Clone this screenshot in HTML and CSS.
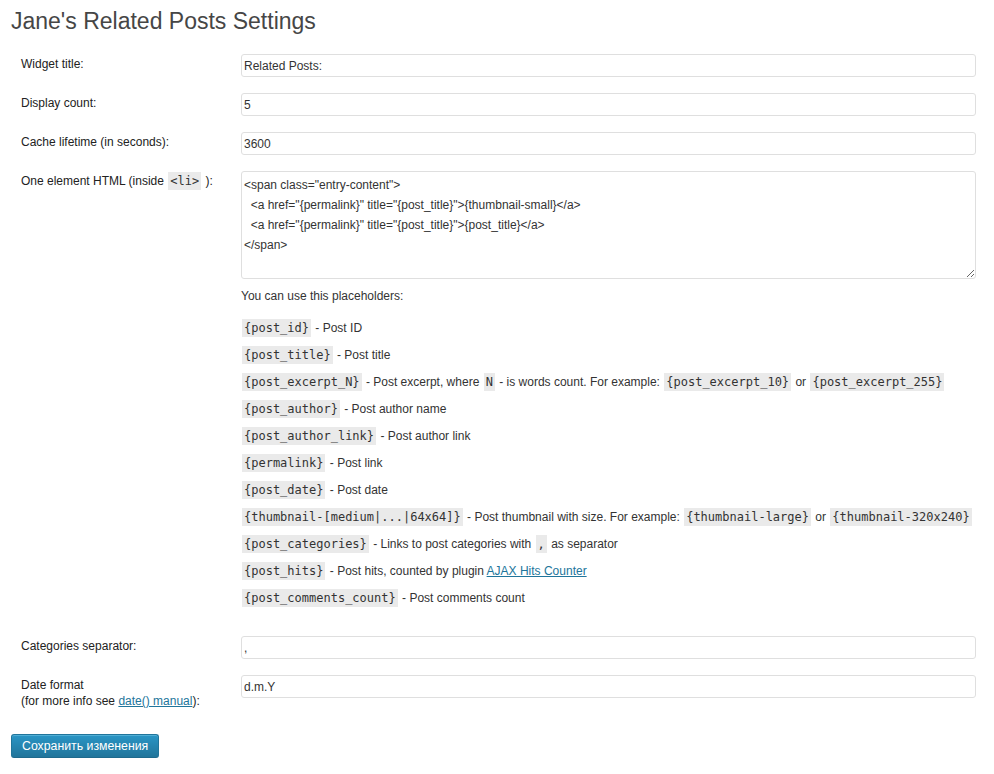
FILE: index.html
```html
<!DOCTYPE html>
<html>
<head>
<meta charset="utf-8">
<link rel="stylesheet" href="styles.css">
</head>
<body>
<div class="wrap">
  <h2 class="page-title">Jane's Related Posts Settings</h2>
  <form class="form">
    <div class="form-table">
      <div class="row">
        <div class="label">Widget title:</div>
        <div class="field"><input class="text-input" type="text" value="Related Posts:"></div>
      </div>
      <div class="row">
        <div class="label">Display count:</div>
        <div class="field"><input class="text-input" type="text" value="5"></div>
      </div>
      <div class="row">
        <div class="label">Cache lifetime (in seconds):</div>
        <div class="field"><input class="text-input" type="text" value="3600"></div>
      </div>
      <div class="row">
        <div class="label">One element HTML (inside <code>&lt;li&gt;</code> ):</div>
        <div class="field">
          <textarea class="html-area">&lt;span class="entry-content"&gt;
  &lt;a href="{permalink}" title="{post_title}"&gt;{thumbnail-small}&lt;/a&gt;
  &lt;a href="{permalink}" title="{post_title}"&gt;{post_title}&lt;/a&gt;
&lt;/span&gt;</textarea>
          <p class="hint">You can use this placeholders:</p>
          <div class="placeholders">
            <p><code>{post_id}</code> - Post ID</p>
            <p><code>{post_title}</code> - Post title</p>
            <p><code>{post_excerpt_N}</code> - Post excerpt, where <code>N</code> - is words count. For example: <code>{post_excerpt_10}</code> or <code>{post_excerpt_255}</code></p>
            <p><code>{post_author}</code> - Post author name</p>
            <p><code>{post_author_link}</code> - Post author link</p>
            <p><code>{permalink}</code> - Post link</p>
            <p><code>{post_date}</code> - Post date</p>
            <p><code>{thumbnail-[medium|...|64x64]}</code> - Post thumbnail with size. For example: <code>{thumbnail-large}</code> or <code>{thumbnail-320x240}</code></p>
            <p><code>{post_categories}</code> - Links to post categories with <code>,</code> as separator</p>
            <p><code>{post_hits}</code> - Post hits, counted by plugin <a href="#">AJAX Hits Counter</a></p>
            <p><code>{post_comments_count}</code> - Post comments count</p>
          </div>
        </div>
      </div>
      <div class="row">
        <div class="label">Categories separator:</div>
        <div class="field"><input class="text-input" type="text" value=","></div>
      </div>
      <div class="row">
        <div class="label">Date format<br>(for more info see <a href="#">date() manual</a>):</div>
        <div class="field"><input class="text-input" type="text" value="d.m.Y"></div>
      </div>
    </div>
    <p class="submit"><button type="button" class="button-primary">Сохранить изменения</button></p>
  </form>
</div>
</body>
</html>
```
FILE: styles.css
```css
html, body {
  margin: 0;
  padding: 0;
  background: #fff;
}
body {
  font-family: "Liberation Sans", Arial, sans-serif;
  font-size: 12px;
  line-height: 16px;
  color: #333;
}
.wrap {
  padding: 0 18px 0 11px;
}
.page-title {
  margin: 0;
  padding: 7px 0 4px;
  font-size: 23px;
  line-height: 29px;
  font-weight: normal;
  color: #464646;
}
.form-table {
  margin-top: 6px;
  display: grid;
  grid-template-columns: 230px 1fr;
}
.row {
  display: contents;
}
.label {
  padding: 10px 10px 10px 10px;
  color: #222;
}
.field {
  padding: 8px 0;
}
.text-input {
  display: block;
  box-sizing: border-box;
  width: 100%;
  height: 23px;
  margin: 0;
  padding: 2px 2px;
  border: 1px solid #dfdfdf;
  border-radius: 3px;
  background: #fff;
  font-family: "Liberation Sans", Arial, sans-serif;
  font-size: 12px;
  color: #333;
  outline: none;
}
.html-area {
  display: block;
  box-sizing: border-box;
  width: 100%;
  height: 108px;
  margin: 0;
  padding: 3px 2px;
  border: 1px solid #dfdfdf;
  border-radius: 3px;
  background: #fff;
  font-family: "Liberation Sans", Arial, sans-serif;
  font-size: 12px;
  line-height: 20px;
  color: #333;
  resize: vertical;
  outline: none;
}
code {
  font-family: "DejaVu Sans Mono", monospace;
  font-size: 12px;
  line-height: 12px;
  background: #eaeaea;
  padding: 2px 2px;
  margin: 0 1px;
  color: #333;
}
a {
  color: #21759b;
  text-decoration: underline;
}
.hint {
  margin: 9px 0 0;
}
.placeholders {
  padding-top: 16px;
  padding-bottom: 3px;
}
.placeholders p {
  margin: 0 0 11px;
}
.submit {
  margin: 15px 0 0;
}
.button-primary {
  display: inline-block;
  box-sizing: border-box;
  height: 24px;
  padding: 0 10px 1px;
  border: 1px solid #21759b;
  border-bottom-color: #1e6a8d;
  border-radius: 3px;
  background: linear-gradient(to bottom, #2a95c5, #21759b);
  box-shadow: inset 0 1px 0 rgba(120, 200, 230, 0.5);
  color: #fff;
  font-family: "Liberation Sans", Arial, sans-serif;
  font-size: 12.3px;
  line-height: 22px;
  cursor: pointer;
}
```
